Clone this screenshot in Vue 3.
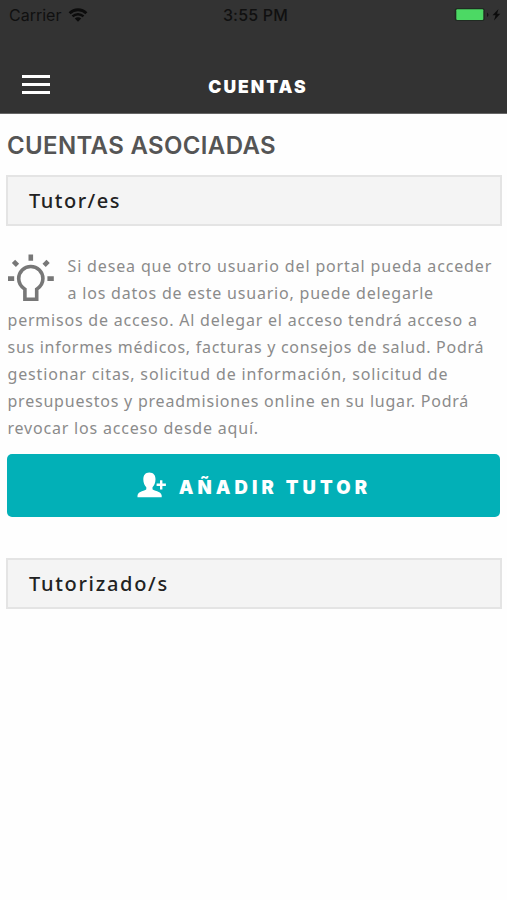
<template>
  <div class="screen">
    <header class="header">
      <div class="status-bar">
        <div class="status-left">
          <span class="carrier">Carrier</span>
          <svg class="wifi" viewBox="0 0 20 14" width="20" height="14">
            <path d="M1.6 5.2a12 12 0 0 1 16.8 0" fill="none" stroke="#0c0c0c" stroke-width="2.8" />
            <path d="M4.5 8.4a7.9 7.9 0 0 1 11 0" fill="none" stroke="#0c0c0c" stroke-width="2.5" />
            <path d="M10 13.8l-3.2-3.3a4.5 4.5 0 0 1 6.4 0z" fill="#0c0c0c" />
          </svg>
        </div>
        <span class="clock">3:55 PM</span>
        <svg class="battery" viewBox="0 0 48 16" width="48" height="16">
          <rect x="0.7" y="1" width="30" height="13" rx="2.5" fill="#202b22" />
          <rect x="2.3" y="2.3" width="27" height="10.7" rx="1" fill="#4cd964" />
          <path d="M33 5.5q3 2.3 0 4.6z" fill="#151515" />
          <path d="M44.5 2l-6 6.2h3.1L40 13.5l6.3-6.7h-3.2z" fill="#0c0c0c" />
        </svg>
      </div>
      <div class="nav-bar">
        <button class="menu-button" type="button" aria-label="Menú">
          <span></span>
          <span></span>
          <span></span>
        </button>
        <h1 class="nav-title">CUENTAS</h1>
      </div>
    </header>

    <main class="content">
      <h2 class="page-title">CUENTAS ASOCIADAS</h2>

      <div class="section-box">Tutor/es</div>

      <div class="info">
        <svg class="bulb" viewBox="0 0 48 50" width="48" height="50">
          <g fill="none" stroke="#777" stroke-width="3.6">
            <path d="M16.9 46.2V36.2C12.8 33.7 10.7 29.8 10.7 25.6a12.1 12.1 0 0 1 24.2 0c0 4.2-2.1 8.1-6.2 10.6v10z" />
            <path stroke-width="4.6" d="M22.8 1.6v6.2M0 25.6H6.2M39.4 25.6H45.8M5.5 8.3l4 4M40.1 8.3l-4 4" />
          </g>
        </svg>
        <p class="info-text">
          <span v-for="line in infoLines" :key="line.text" :style="{ letterSpacing: line.spacing + 'px' }">{{ line.text }}</span>
        </p>
      </div>

      <button class="add-button" type="button">
        <svg class="user-icon" viewBox="0 0 30 26" width="30" height="26">
          <path d="M12.3.5c-4 0-6 2.800-6 6.700 0 3.700 1.300 6.400 3 8v2.100C8.800 19 1 19 .5 23.500v1.800h24.200v-1.800C24.200 19 16.200 19 15.500 17.300v-2.100c1.700-1.600 3-4.300 3-8 0-3.900-2-6.700-6.200-6.700z" fill="#fff" />
          <path d="M24.2 8.2v9.2M19.6 12.8h9.300" stroke="#fff" stroke-width="2.4" />
        </svg>
        <span class="add-label">AÑADIR TUTOR</span>
      </button>

      <div class="section-box section-box-wide">Tutorizado/s</div>
    </main>
  </div>
</template>

<script setup>
import { ref } from 'vue';

// texto de ayuda, una entrada por línea
const infoLines = ref([
  { text: 'Si desea que otro usuario del portal pueda acceder', spacing: 0.85 },
  { text: 'a los datos de este usuario, puede delegarle', spacing: 0.8 },
  { text: 'permisos de acceso. Al delegar el acceso tendrá acceso a', spacing: 0.79 },
  { text: 'sus informes médicos, facturas y consejos de salud. Podrá', spacing: 0.72 },
  { text: 'gestionar citas, solicitud de información, solicitud de', spacing: 0.85 },
  { text: 'presupuestos y preadmisiones online en su lugar. Podrá', spacing: 0.78 },
  { text: 'revocar los acceso desde aquí.', spacing: 0.8 }
]);
</script>

<style>
body {
  background-color: #fefefe;
}
</style>

<style scoped>
.screen {
  min-height: 900px;
  background-color: #fefefe;
  font-family: "Noto Sans", "Open Sans", sans-serif;
}

.header {
  height: 114px;
  box-sizing: border-box;
  background-color: #333333;
  border-bottom: 1px solid #666;
}

.status-bar {
  display: grid;
  grid-template-columns: 1fr auto 1fr;
  align-items: center;
  height: 30px;
  padding: 0 5px 0 9px;
  color: #101010;
  font-family: Inter, sans-serif;
  font-size: 16px;
}

.status-left {
  display: flex;
  align-items: center;
  gap: 7px;
}

.clock {
  font-weight: 500;
  letter-spacing: 0.2px;
}

.battery {
  justify-self: end;
}

.nav-bar {
  display: grid;
  grid-template-columns: 1fr auto 1fr;
  align-items: center;
  height: 50px;
  padding: 29px 17px 0 22px;
}

.menu-button {
  display: flex;
  flex-direction: column;
  gap: 5px;
  width: 28px;
  padding: 0;
  border: 0;
  background: none;
}

.menu-button span {
  height: 3px;
  background-color: #fff;
}

.nav-title {
  margin: 0;
  padding: 6px 0 0 4px;
  color: #fff;
  font-family: Inter, sans-serif;
  font-size: 17.5px;
  line-height: 22px;
  font-weight: 900;
  letter-spacing: 2px;
}

.content {
  padding: 0 5px 0 6px;
}

.page-title {
  margin: 0;
  padding: 16px 0 14px 1px;
  color: #555;
  font-family: Inter, sans-serif;
  font-size: 24px;
  line-height: 31px;
  font-weight: 600;
  letter-spacing: 0.35px;
  white-space: nowrap;
}

.section-box {
  display: flex;
  align-items: center;
  height: 51px;
  box-sizing: border-box;
  padding-left: 21px;
  border: 2px solid #e4e4e4;
  background-color: #f4f4f4;
  color: #222;
  font-size: 20px;
  font-weight: 500;
  letter-spacing: 1.5px;
}

.section-box-wide {
  letter-spacing: 1.7px;
}

.info {
  padding: 27px 0 12px 1.5px;
}

.bulb {
  float: left;
  margin-right: 12px;
}

.info-text {
  margin: 0;
  color: #8b8b8b;
  font-size: 16px;
  line-height: 27px;
}

.info-text span {
  display: block;
  white-space: nowrap;
}

.add-button {
  display: flex;
  align-items: center;
  justify-content: center;
  gap: 12px;
  width: 493px;
  height: 63px;
  margin: 0 0 41px 1.4px;
  padding: 0;
  border: 0;
  border-radius: 5px;
  background-color: #02b0b7;
  color: #fff;
}

.user-icon {
  margin-bottom: 2px;
}

.add-label {
  padding-top: 2px;
  font-family: Inter, sans-serif;
  font-size: 18.5px;
  font-weight: 900;
  letter-spacing: 4.1px;
}
</style>
